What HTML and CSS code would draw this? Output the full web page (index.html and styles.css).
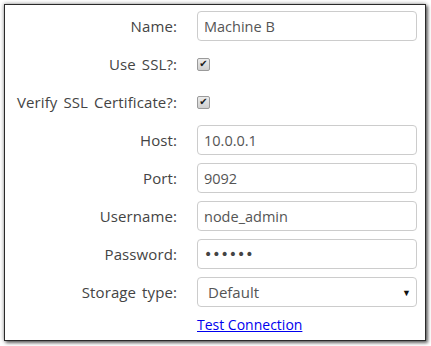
FILE: index.html
```html
<!DOCTYPE html>
<html lang="en">
<head>
    <meta charset="UTF-8">
    <title>Connection</title>
    <link rel="stylesheet" href="styles.css">
</head>
<body>
    <div class="panel">
        <form class="conn-form">
            <label for="name">Name:</label>
            <input type="text" id="name" value="Machine B">

            <label for="ssl">Use SSL?:</label>
            <div class="check-cell"><input type="checkbox" id="ssl" checked></div>

            <label for="verify">Verify SSL Certificate?:</label>
            <div class="check-cell"><input type="checkbox" id="verify" checked></div>

            <label for="host">Host:</label>
            <input type="text" id="host" value="10.0.0.1">

            <label for="port">Port:</label>
            <input type="text" id="port" value="9092">

            <label for="user">Username:</label>
            <input type="text" id="user" value="node_admin">

            <label for="pass">Password:</label>
            <input type="password" id="pass" value="secret">

            <label for="storage">Storage type:</label>
            <div class="select-wrap">
                <select id="storage">
                    <option>Default</option>
                </select>
            </div>

            <span></span>
            <a href="#" class="test-link">Test Connection</a>
        </form>
    </div>
</body>
</html>
```

FILE: styles.css
```css
body {
    margin: 0;
    background-color: #ffffff;
    font-family: "Open Sans", "Noto Sans", sans-serif;
    font-size: 14px;
    color: #444444;
}
.panel {
    box-sizing: border-box;
    width: 422px;
    height: 337px;
    margin: 4px 5px 5px 4px;
    border: 1px solid #2a2a2a;
    box-shadow: 0 0 4px rgba(0,0,0,0.45), 2px 2px 3px rgba(0,0,0,0.5);
    padding-top: 6px;
}
.conn-form {
    display: grid;
    grid-template-columns: 172px 220px;
    grid-auto-rows: 30px;
    column-gap: 20px;
    row-gap: 8px;
    align-items: center;
}
.conn-form label {
    text-align: right;
    font-size: 15px;
    word-spacing: 2px;
    letter-spacing: 0.1px;
}
input[type="text"], input[type="password"], select {
    box-sizing: border-box;
    width: 220px;
    height: 30px;
    border: 1px solid #cccccc;
    border-radius: 4px;
    padding: 0 6px;
    font-family: inherit;
    font-size: 14.5px;
    color: #555555;
    background: #ffffff;
}
input[type="password"] {
    font-family: "DejaVu Sans", sans-serif;
    font-size: 14px;
    color: #444444;
}
.check-cell {
    display: flex;
    align-items: center;
}
input[type="checkbox"] {
    appearance: none;
    -webkit-appearance: none;
    width: 13px;
    height: 13px;
    margin: 0;
    border: 1px solid #9a9a9a;
    border-radius: 2px;
    background: linear-gradient(#ececec, #cfcfcf);
    display: flex;
    align-items: center;
    justify-content: center;
}
input[type="checkbox"]:checked::after {
    content: "\2714";
    font-family: "DejaVu Sans", sans-serif;
    font-size: 10px;
    line-height: 1;
    color: #1a1a1a;
}
.select-wrap {
    position: relative;
}
select {
    appearance: none;
    -webkit-appearance: none;
    padding-left: 10px;
    font-size: 15px;
}
.select-wrap::after {
    content: "\25BC";
    position: absolute;
    right: 6px;
    top: 9px;
    font-size: 9px;
    color: #111111;
    pointer-events: none;
}
.test-link {
    color: #0000ee;
    font-size: 14px;
    align-self: start;
}
```
